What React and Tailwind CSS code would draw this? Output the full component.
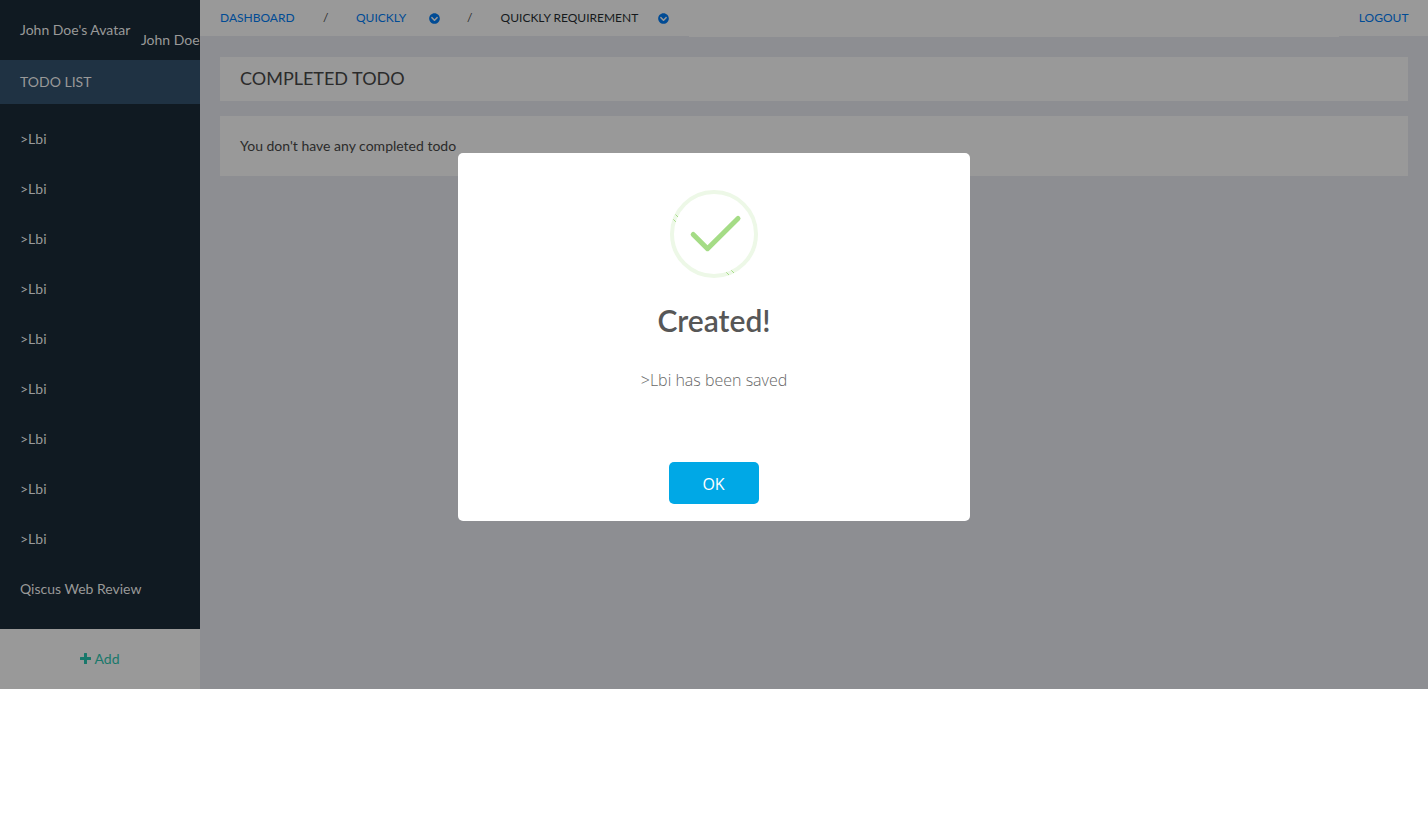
import React from "react";
import { FaChevronCircleDown } from "react-icons/fa";

const projects = [...Array(9).fill(">Lbi"), "Qiscus Web Review"];

function Sidebar() {
  return (
    <aside className="flex h-[689px] w-[200px] shrink-0 flex-col overflow-hidden bg-[#101a22] text-sm text-[#999999]">
      <div className="flex h-[60px] shrink-0 items-start whitespace-nowrap pl-5">
        <span className="pt-5 leading-5">John Doe's Avatar</span>
        <span className="ml-[10.600px] pt-[30px] leading-5">John Doe</span>
      </div>
      <div className="h-11 shrink-0 bg-[#1f3243] pl-5 leading-[44px]">TODO LIST</div>
      <ul className="flex-1 pt-[10px]">
        {projects.map((name, i) => (
          <li key={i} className="h-[50px] pl-5 leading-[50px]">{name}</li>
        ))}
      </ul>
      <button className="flex h-[60px] shrink-0 items-center justify-center gap-[3px] bg-[#999999] text-[#18786b]">
        <svg width="11" height="12" viewBox="0 0 11 12" fill="currentColor">
          <path d="M4.500 0h2q.5 0 .5.5v3.500h3.500q.5 0 .5.5v2q0 .5-.5.5H7v3.500q0 .5-.5.5h-2q-.5 0-.5-.5V7H.5Q0 7 0 6.500v-2Q0 4 .5 4H4V.5q0-.5.5-.5z" />
        </svg>
        <span>Add</span>
      </button>
    </aside>
  );
}

function Header() {
  return (
    <header className="flex h-[37px] items-start text-xs leading-9 text-[#004b95]">
      <nav className="flex h-9 w-[489px] shrink-0 items-center whitespace-nowrap bg-[#999999] pl-5">
        <span className="w-[103px]">DASHBOARD</span>
        <span className="w-[33px] text-[#2b2b2b]">/</span>
        <span className="w-[73px]">QUICKLY</span>
        <span className="w-[38px]"><FaChevronCircleDown size={11} /></span>
        <span className="w-[33.600px] text-[#2b2b2b]">/</span>
        <span className="w-[157.400px] text-[#16191c]">QUICKLY REQUIREMENT</span>
        <FaChevronCircleDown size={11} />
      </nav>
      <div className="h-[37px] flex-1 bg-[#999999]" />
      <div className="h-9 w-[89px] bg-[#999999] pr-[19.500px] text-right">LOGOUT</div>
    </header>
  );
}

function SuccessIcon() {
  return (
    <svg className="block" width="88" height="88" viewBox="0 0 88 88" fill="none">
      <circle cx="44" cy="44" r="42" stroke="#edf8e7" strokeWidth="4" />
      <path d="M23.200 44.400L37.500 58.700L68 28.500" stroke="#a5dc86" strokeWidth="5" strokeLinecap="round" strokeLinejoin="round" />
      <path d="M5.500 24.500l2.500 2.500M3.300 29.300l2.500 2.500M56.300 82.300l2.700 2.700M61.300 80.300l2.700 2.700" stroke="#a5dc86" strokeWidth="1" />
    </svg>
  );
}

function Dialog() {
  return (
    <div role="dialog" className="absolute left-[458px] top-[153px] flex h-[368px] w-[512px] flex-col items-center rounded-[5px] bg-white pt-[37px]">
      <SuccessIcon />
      <h2 className="mt-[22px] text-[30px] font-semibold leading-10 text-[#575757]">Created!</h2>
      <p className="mt-[30px] font-['Open_Sans',sans-serif] text-base font-light leading-5 text-[#676767]">&gt;Lbi has been saved</p>
      <button className="mt-[72px] h-[42px] w-[90px] rounded-[5px] bg-[#00a8e6] pr-px pt-[2px] font-['Open_Sans',sans-serif] text-base text-white">OK</button>
    </div>
  );
}

export default function App() {
  return (
    <div className="relative h-[824px] w-[1428px] overflow-hidden bg-white font-[Lato,sans-serif]">
      <div className="flex h-[689px]">
        <Sidebar />
        <main className="flex flex-1 flex-col bg-[#8d8e92] text-[#2b2b2b]">
          <Header />
          <div className="flex flex-col gap-[15px] px-5 pt-5">
            <h1 className="h-11 bg-[#999999] pl-5 text-lg leading-[42px]">COMPLETED TODO</h1>
            <section className="h-[60px] bg-[#999999] pl-5 text-sm leading-[60px]">You don't have any completed todo</section>
          </div>
        </main>
      </div>
      <Dialog />
    </div>
  );
}
